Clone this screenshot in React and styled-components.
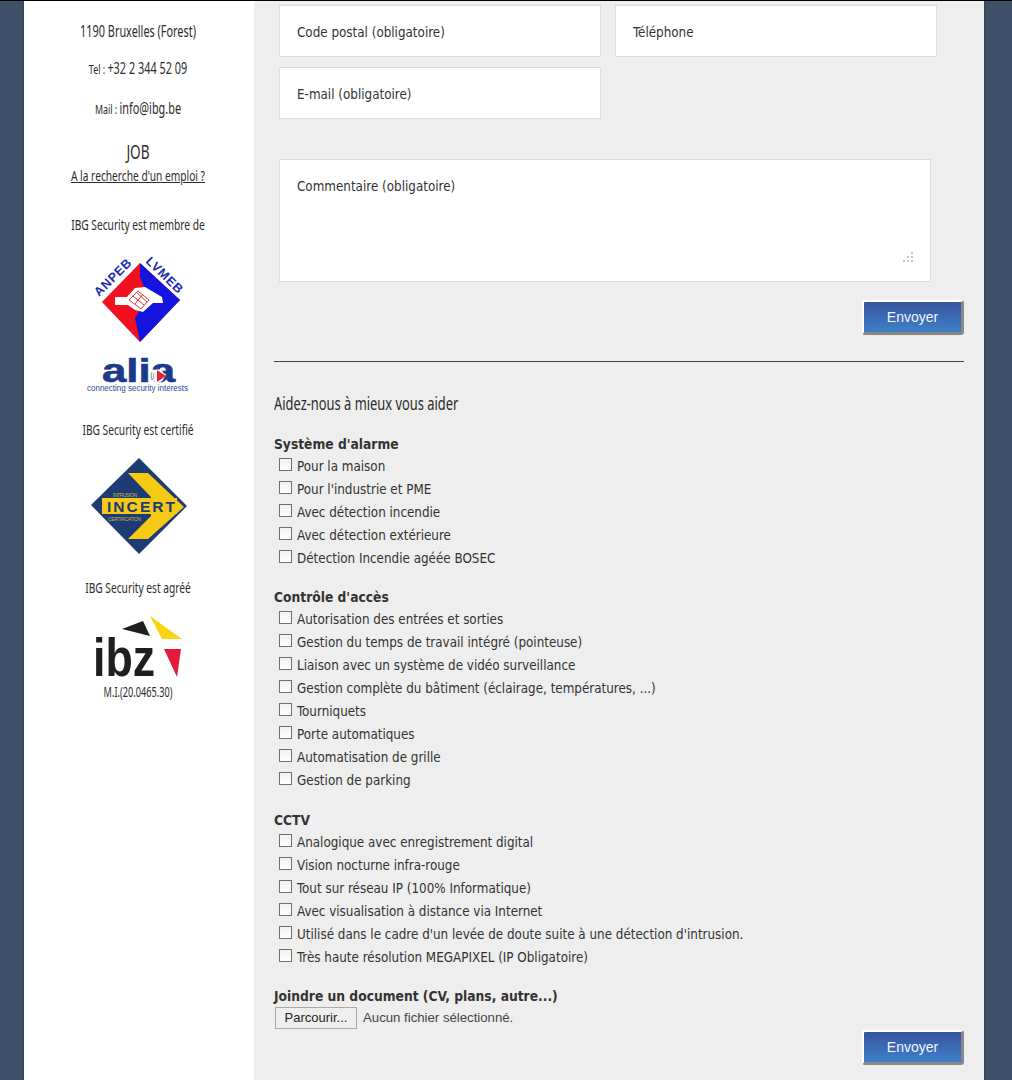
import React from 'react'
import styled, { createGlobalStyle, css } from 'styled-components'

const GlobalStyle = createGlobalStyle`
  html, body {
    margin: 0;
    padding: 0;
    background: #3e5168;
  }
  * { box-sizing: border-box; }
`
// the site's condensed webfont isn't available, squeeze Noto Sans instead
const condensed = css`
  font-family: "Noto Sans", sans-serif;
  font-weight: normal;
  transform: scaleX(.68);
`
const Page = styled.div`
  width: 1012px;
  height: 1080px;
  overflow: hidden;
  border-top: 1px solid #000;
  padding: 0 28px 0 24px;
  background: #3e5168;
`
const Wrapper = styled.div`
  display: grid;
  grid-template-columns: 230px 730px;
  height: 1079px;
  box-shadow: 0 0 3px rgba(0, 0, 0, .4);
`
const SideBar = styled.aside`
  background: #fff;
  color: #2c2c2c;
  text-align: center;
  font-size: 15px;
  padding-top: 21px;
  padding-right: 2px;
`
const SideLine = styled.p`
  ${condensed}
  margin: 0 0 ${p => p.$gap || 0}px;
  height: 18px;
  line-height: 18px;
  white-space: nowrap;
  font-size: ${p => p.$size || 15}px;
`
const Small = styled.span`
  font-size: 13px;
`
const JobTitle = styled.h3`
  ${condensed}
  margin: 0;
  height: 25px;
  line-height: 24px;
  font-size: 20px;
`
const JobLink = styled.a`
  ${condensed}
  display: block;
  margin-bottom: 30px;
  height: 20px;
  line-height: 20px;
  color: #2c2c2c;
  font-size: 15px;
  text-decoration: underline;
`
const Logo = styled.svg`
  display: block;
  overflow: visible;
  margin: ${p => p.$top || 0}px auto ${p => p.$bottom || 0}px;
`
const Content = styled.main`
  background: #eee;
  padding: 4px 20px 0;
  font-family: "DejaVu Sans", "Noto Sans", sans-serif;
  font-stretch: condensed;
  font-size: 13.3px;
  color: #333;
`
const Fields = styled.div`
  display: grid;
  grid-template-columns: 322px 322px;
  gap: 10px 14px;
  margin-left: 5px;
`
const Field = styled.input`
  height: 52px;
  width: 100%;
  padding: 2px 17px 0;
  background: #fff;
  border: 1px solid #ddd;
  font: inherit;
  outline: none;
  &::placeholder { color: #333; opacity: 1; }
`
const CommentBox = styled.textarea`
  display: block;
  width: 652px;
  height: 123px;
  margin: 40px 0 18px 5px;
  padding: 19px 17px;
  background: #fff;
  border: 1px solid #ddd;
  font: inherit;
  outline: none;
  resize: none;
  &::placeholder { color: #333; opacity: 1; }
`
const CommentWrap = styled.div`
  position: relative;
`
const Grip = styled.svg`
  position: absolute;
  right: 50px;
  bottom: 18px;
`
const ButtonRow = styled.div`
  display: flex;
  justify-content: flex-end;
`
const SendButton = styled.button`
  width: 102px;
  height: 35px;
  padding: 0;
  border-style: solid;
  border-width: 2px 3px 3px 2px;
  border-color: #fff #888 #888 #fff;
  border-radius: 3px;
  background: linear-gradient(#37559e, #3f80c8);
  color: #f2f5ff;
  font-family: "Liberation Sans", Arial, sans-serif;
  font-size: 14px;
`
const Rule = styled.hr`
  margin: 26px 0 0;
  height: 1px;
  border: 0;
  background: #444;
`
const HelpTitle = styled.h2`
  ${condensed}
  transform: scaleX(.716);
  transform-origin: left center;
  margin: 29px 0 18px;
  height: 24px;
  line-height: 24px;
  font-size: 18px;
  white-space: nowrap;
  color: #2c2c2c;
`
const Group = styled.section`
  margin-bottom: ${p => p.$gap}px;
`
const GroupTitle = styled.h4`
  margin: 0;
  height: 21px;
  line-height: 22px;
  font-size: 13.7px;
  font-weight: bold;
`
const Option = styled.label`
  display: flex;
  align-items: center;
  height: 23px;
  padding: 2px 0 0 5px;
`
const Check = styled.input.attrs({ type: 'checkbox' })`
  appearance: none;
  width: 13px;
  height: 13px;
  margin: 0 5px 5px 0;
  background: linear-gradient(#f0f0f0, #fff);
  border: 1px solid #707070;
`
const FileRow = styled.div`
  display: flex;
  align-items: center;
  gap: 6px;
  height: 23px;
  font-family: "Liberation Sans", Arial, sans-serif;
  font-stretch: normal;
  font-size: 13.2px;
  color: #444;
`
const FileButton = styled.button`
  width: 82px;
  height: 22px;
  margin-left: 1px;
  padding: 0;
  background: #eee;
  border: 1px solid #aaa;
  font-family: "Liberation Sans", Arial, sans-serif;
  font-size: 13px;
  color: #222;
`
const BottomRow = styled(ButtonRow)`
  margin-top: 1px;
`

const groups = [
  {
    title: "Système d'alarme",
    gap: 17,
    items: ['Pour la maison', "Pour l'industrie et PME", 'Avec détection incendie', 'Avec détection extérieure', 'Détection Incendie agéée BOSEC'],
  },
  {
    title: "Contrôle d'accès",
    gap: 18,
    items: [
      'Autorisation des entrées et sorties',
      'Gestion du temps de travail intégré (pointeuse)',
      'Liaison avec un système de vidéo surveillance',
      'Gestion complète du bâtiment (éclairage, températures, ...)',
      'Tourniquets',
      'Porte automatiques',
      'Automatisation de grille',
      'Gestion de parking',
    ],
  },
  {
    title: 'CCTV',
    gap: 17,
    items: [
      'Analogique avec enregistrement digital',
      'Vision nocturne infra-rouge',
      'Tout sur réseau IP (100% Informatique)',
      'Avec visualisation à distance via Internet',
      "Utilisé dans le cadre d'un levée de doute suite à une détection d'intrusion.",
      'Très haute résolution MEGAPIXEL (IP Obligatoire)',
    ],
  },
]

const AnpebLogo = () => (
  <Logo width="100" height="96" viewBox="0 0 100 96" $top={17}>
    <defs>
      <path id="anpeb-left" d="M11 47 L47 11" />
      <path id="anpeb-right" d="M57 12 L93 47" />
    </defs>
    <path d="M52 13 L14 52 L52 92 L92 50 Z" fill="#f01020" />
    <path d="M52 13 L52 27 L56 37 L52 60 L47 68 L52 92 L92 50 Z" fill="#1414e0" />
    <path d="M27 47 L39 47 L47 38 L57 37 L74 47 L75 53 L65 53 L55 62 L47 60 L40 55 L27 55 Z" fill="#fff" />
    <path d="M41 50 L50 41 L61 50 L53 59 Z M45 46 L56 55 M49 43 L59 52 M47 54 L55 44" fill="none" stroke="#c22" strokeWidth=".9" />
    <text fontFamily="Liberation Sans" fontSize="12.5" fontWeight="bold" fill="#1a2ab0" letterSpacing=".8">
      <textPath href="#anpeb-left">ANPEB</textPath>
    </text>
    <text fontFamily="Liberation Sans" fontSize="12.5" fontWeight="bold" fill="#1a2ab0" letterSpacing=".8">
      <textPath href="#anpeb-right">LVMEB</textPath>
    </text>
  </Logo>
)

const AliaLogo = () => (
  <Logo width="120" height="45" viewBox="0 0 120 45" $top={5} $bottom={24}>
    <text x="24" y="31" fontFamily="Liberation Sans" fontSize="33" fontWeight="bold" fill="#1c3a8a" stroke="#1c3a8a" strokeWidth=".6" textLength="73" lengthAdjust="spacingAndGlyphs">alia</text>
    <circle cx="80" cy="25" r="6.5" fill="#fff" />
    <path d="M74 21 Q72 25 74 29 M76 22 Q75 25 76 28" fill="none" stroke="#888" strokeWidth=".8" />
    <path d="M79 19 L88 25 L79 31 Z" fill="#e5203a" />
    <text x="9" y="40" fontFamily="Liberation Sans" fontSize="8.6" fill="#2c4a92" textLength="101" lengthAdjust="spacingAndGlyphs">connecting security interests</text>
  </Logo>
)

const IncertLogo = () => (
  <Logo width="98" height="98" viewBox="0 0 98 98" $top={19} $bottom={23}>
    <path d="M50 1 L98 49 L50 97 L2 48 Z" fill="#1e3c74" />
    <path d="M39 16 L59 16 L95 50 L59 82 L39 82 L62 59 L62 40 Z" fill="#f6c915" />
    <rect x="13" y="41" width="75" height="16" fill="#f6c915" />
    <text x="18" y="55" fontFamily="Liberation Sans" fontSize="15.5" fontWeight="bold" fill="#1e3c74" textLength="68">INCERT</text>
    <text x="24" y="39.5" fontFamily="Liberation Sans" fontSize="5" fill="#c9b048" textLength="24">INTRUSION</text>
    <text x="19" y="64" fontFamily="Liberation Sans" fontSize="5" fill="#c9b048" textLength="33">CERTIFICATION</text>
  </Logo>
)

const IbzLogo = () => (
  <Logo width="90" height="66" viewBox="0 0 90 66" $top={19} $bottom={2}>
    <path d="M29 14 L50 6 L57 21 Z" fill="#1f1f1f" />
    <path d="M57 1 L89 24 L69 24 Z" fill="#fbd40f" />
    <path d="M71 34 L88 34 L84 62 Z" fill="#e31b3b" />
    <text x="0" y="61" fontFamily="Liberation Sans" fontSize="54" fontWeight="bold" fill="#1f1f1f" textLength="62" lengthAdjust="spacingAndGlyphs">ibz</text>
  </Logo>
)

const App = () => (
  <>
    <GlobalStyle />
    <Page>
      <Wrapper>
        <SideBar>
          <SideLine $gap={19} $size={16}>1190 Bruxelles (Forest)</SideLine>
          <SideLine $gap={22} $size={16}><Small>Tel : </Small>+32 2 344 52 09</SideLine>
          <SideLine $gap={23} $size={16}><Small>Mail : </Small>info@ibg.be</SideLine>
          <JobTitle>JOB</JobTitle>
          <JobLink>A la recherche d'un emploi ?</JobLink>
          <SideLine>IBG Security est membre de</SideLine>
          <AnpebLogo />
          <AliaLogo />
          <SideLine>IBG Security est certifié</SideLine>
          <IncertLogo />
          <SideLine>IBG Security est agréé</SideLine>
          <IbzLogo />
          <SideLine $size={13.5}>M.I.(20.0465.30)</SideLine>
        </SideBar>
        <Content>
          <Fields>
            <Field placeholder="Code postal (obligatoire)" />
            <Field placeholder="Téléphone" />
            <Field placeholder="E-mail (obligatoire)" />
          </Fields>
          <CommentWrap>
            <CommentBox placeholder="Commentaire (obligatoire)" />
            <Grip width="12" height="12" viewBox="0 0 12 12" fill="#c4c4c4">
              <rect x="9" y="0" width="2" height="2" />
              <rect x="5" y="4" width="2" height="2" />
              <rect x="9" y="4" width="2" height="2" />
              <rect x="1" y="8" width="2" height="2" />
              <rect x="5" y="8" width="2" height="2" />
              <rect x="9" y="8" width="2" height="2" />
            </Grip>
          </CommentWrap>
          <ButtonRow><SendButton>Envoyer</SendButton></ButtonRow>
          <Rule />
          <HelpTitle>Aidez-nous à mieux vous aider</HelpTitle>
          {groups.map(g => (
            <Group key={g.title} $gap={g.gap}>
              <GroupTitle>{g.title}</GroupTitle>
              {g.items.map(item => (
                <Option key={item}><Check />{item}</Option>
              ))}
            </Group>
          ))}
          <GroupTitle>Joindre un document (CV, plans, autre...)</GroupTitle>
          <FileRow>
            <FileButton>Parcourir...</FileButton>
            Aucun fichier sélectionné.
          </FileRow>
          <BottomRow><SendButton>Envoyer</SendButton></BottomRow>
        </Content>
      </Wrapper>
    </Page>
  </>
)

export default App
